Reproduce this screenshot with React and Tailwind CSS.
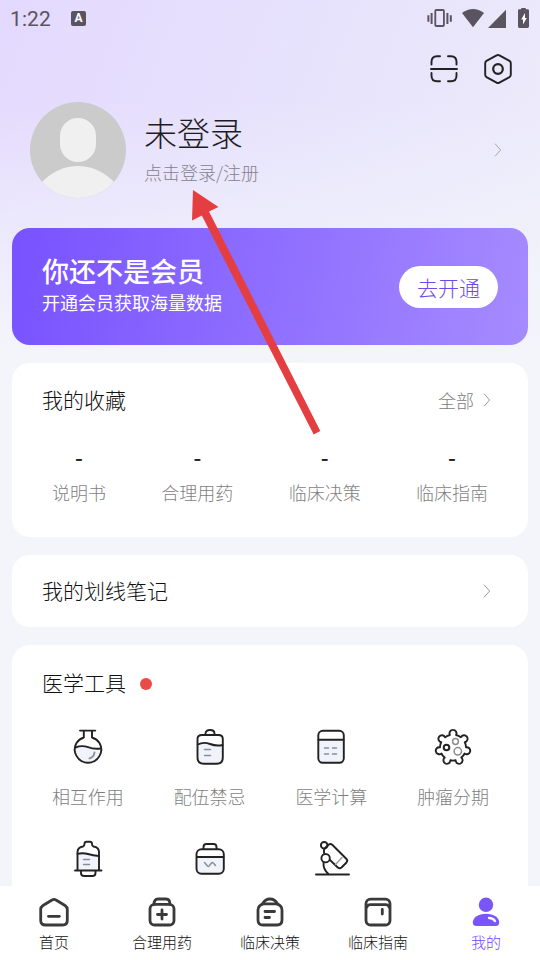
import React from 'react';

const INK = '#222222';

function Chevron({ className = '' }) {
  return (
    <svg width="8" height="14" viewBox="0 0 8 14" fill="none" stroke="currentColor" strokeWidth="1" className={className}>
      <path d="M1 0.7L6.6 7L1 13.3" />
    </svg>
  );
}

/* Status bar and header icons */

function StatusBar() {
  return (
    <div className="flex h-9 items-center justify-between pl-[10px] pr-[10px] text-[#59545f]">
      <div className="flex items-center gap-[20px]">
        <span className="font-['Roboto'] text-[21px] font-normal leading-none tracking-[0.1px] pt-[2px]">1:22</span>
        <span className="flex h-[15px] w-[15px] flex-col items-center justify-center rounded-[2px] bg-[#59545f] font-['Roboto'] text-[12px] font-bold leading-none text-white">
          A
        </span>
      </div>
      <svg width="104" height="22" viewBox="427 6 104 22" fill="currentColor">
        <rect x="436.300" y="9" width="8.600" height="16" rx="1" fill="none" stroke="currentColor" strokeWidth="1.800" />
        <path d="M431.600 12h2v11h-2zM428.400 14.200h2v6.600h-2zM447.400 12h2v11h-2zM450.800 14.200h2v6.600h-2z" />
        <path d="M463 12Q474 4 485 12L474 26.200Z" />
        <path d="M507 8.800V27H489Z" />
        <path d="M524 7h2q1 0 1 1.200h1.600q1.400 0 1.400 1.400v16q0 1.400 -1.400 1.400h-8.200q-1.400 0 -1.400 -1.400v-16q0 -1.400 1.400 -1.400h1.600q0 -1.200 1 -1.200z" />
        <path d="M526 12v5h1.800L524 23.500v-5h-1.800z" fill="#fff" />
      </svg>
    </div>
  );
}

function ScanIcon() {
  return (
    <svg width="28" height="28" viewBox="0 0 28 28" fill="none" stroke={INK} strokeWidth="1.9" strokeLinecap="round">
      <path d="M1.500 9.500V7Q1.500 1.300 7 1.300H10M18 1.300H21Q26.500 1.300 26.500 7V9.500M1.500 18V20.500Q1.500 26.300 7 26.300H10M18 26.300H21Q26.500 26.300 26.500 20.500V18M1 14H27" />
    </svg>
  );
}

function SettingsIcon() {
  return (
    <svg width="28" height="30" viewBox="0 0 28 30" fill="none" stroke={INK} strokeWidth="1.9" strokeLinejoin="round">
      <path d="M12.600 1.400Q14 0.600 15.400 1.400L25.500 6.900Q26.800 7.700 26.800 9.200V20.800Q26.800 22.300 25.500 23.100L15.400 28.600Q14 29.400 12.600 28.600L2.500 23.100Q1.200 22.300 1.200 20.800V9.200Q1.200 7.700 2.500 6.900Z" />
      <circle cx="14" cy="15" r="4.800" strokeWidth="2.200" />
    </svg>
  );
}

function Avatar() {
  return (
    <svg width="96" height="96" viewBox="0 0 96 96">
      <clipPath id="avatar">
        <circle cx="48" cy="48" r="48" />
      </clipPath>
      <g clipPath="url(#avatar)">
        <rect width="96" height="96" fill="#cbcbcb" />
        <rect x="30" y="16" width="36" height="44" rx="18" fill="#f0f0f0" />
        <circle cx="48" cy="112" r="48" fill="#f0f0f0" />
      </g>
    </svg>
  );
}

/* Medical tool icons, all on a 40x40 grid */

function ToolIcon({ children }) {
  return (
    <svg width="40" height="40" viewBox="0 0 40 40" fill="none" stroke={INK} strokeWidth="1.900" strokeLinecap="round" strokeLinejoin="round">
      {children}
    </svg>
  );
}

const FlaskIcon = () => (
  <ToolIcon>
    <path d="M7 21.500Q12 18 20 20.500T33 21A13.200 13.200 0 0 1 7 24Z" fill="#f1f3fb" stroke="none" />
    <path d="M12 3.600H27.300M15.800 4V10.500Q11 12 8.500 16A13.200 13.200 0 1 0 31.500 16Q29 12 24 10.500V4" />
    <path d="M7.500 20.500Q14 18 20 20.200T32.500 21.500" />
    <path d="M26.500 25.500Q26 30 21.500 31.400" stroke="#8b8d98" />
  </ToolIcon>
);

const InfusionIcon = () => (
  <ToolIcon>
    <path d="M8 18Q14 15 20 18T32 18.500V31Q32 36.500 26 36.500H14Q8 36.500 8 31Z" fill="#f1f3fb" stroke="none" />
    <path d="M15.500 8V6.500Q15.500 3 20 3T24.500 6.500V8" />
    <path d="M12 8H28.500Q32.800 8 32.800 12V30.500Q32.800 36.800 26.500 36.800H14Q7.500 36.800 7.500 30.500V12Q7.500 8 12 8Z" />
    <path d="M7.800 17.500Q13.500 14.500 20 17T32.500 18" />
    <path d="M14.500 22.500H20.500M14.500 28.500H20.500" stroke="#8b8d98" strokeWidth="1.500" />
  </ToolIcon>
);

const CalculatorIcon = () => (
  <ToolIcon>
    <path d="M8 13H33V32Q33 35.500 29 35.500H12Q8 35.500 8 32Z" fill="#f1f3fb" stroke="none" />
    <rect x="7.300" y="3.800" width="25.500" height="32" rx="4.500" />
    <path d="M7.500 12.800H32.500" />
    <path d="M13.500 21H17.500M21.500 21H25.500M13.500 27H17.500M21.500 27H25.500" stroke="#8b8d98" strokeWidth="1.500" />
  </ToolIcon>
);

const TumorIcon = () => (
  <ToolIcon>
    <path d="M16.900 8A3.500 3.500 0 1 1 23.100 8Q25.500 8.500 27.900 10.300A3.500 3.500 0 1 1 31.800 15.200Q33 17.500 33 20.300A3.500 3.500 0 1 1 31.600 26.500Q30.500 29 28.300 30.600A3.500 3.500 0 1 1 22.600 33.300Q20 33.900 17.400 33.300A3.500 3.500 0 1 1 11.700 30.600Q9.500 29 8.400 26.500A3.500 3.500 0 1 1 7 20.300Q7 17.500 8.200 15.200A3.500 3.500 0 1 1 12.100 10.300Q14.500 8.500 16.900 8Z" />
    <circle cx="13.500" cy="20.500" r="2.800" strokeWidth="2" />
    <circle cx="22.500" cy="14.500" r="2.900" stroke="#8b8b90" strokeWidth="1.500" />
    <circle cx="24.800" cy="24.300" r="3.700" stroke="#8b8b90" strokeWidth="1.500" />
  </ToolIcon>
);

const DripIcon = () => (
  <ToolIcon>
    <path d="M10 15Q15 13.500 20 15T31 17V31H10Z" fill="#f1f3fb" stroke="none" />
    <path d="M9.500 31V13Q9.500 8.500 15 7.500Q16.500 7 16.500 5Q16.500 2.700 18.500 2.700H22Q24 2.700 24 5Q24 7 25.500 7.500Q31 8.500 31 13V31" />
    <path d="M9.500 14.800Q15 13.500 20 15T31 17M7 31.500H33.500M13 32V34Q13 37 16 37H24.500Q27.500 37 27.500 34V32" />
    <path d="M15.500 20.500H21.500M15.500 25.500H21.500" stroke="#8b8d98" strokeWidth="1.500" />
  </ToolIcon>
);

const MedKitIcon = () => (
  <ToolIcon>
    <path d="M7 18H33V30Q33 34.500 29 34.500H11Q7 34.500 7 30Z" fill="#f1f3fb" stroke="none" />
    <path d="M13.500 10V8Q13.500 5 16.500 5H23.500Q26.500 5 26.500 8V10" />
    <rect x="6.500" y="10.200" width="27.300" height="24.500" rx="5" />
    <path d="M7 18H33.500" />
    <path d="M14.500 23.500L17.500 27Q18.300 27.800 19 27L21.500 24Q22.500 23 23.200 24L25.500 26.500" stroke="#8b8d98" strokeWidth="1.500" />
  </ToolIcon>
);

const MicroscopeIcon = () => (
  <ToolIcon>
    <circle cx="13.200" cy="6.300" r="3.300" />
    <path d="M13 14V11Q13 9.800 14 9L17.500 5.800Q19.500 4.300 21.500 6L35.500 20Q37 21.700 35.500 23.500L30.500 28.500Q28.500 30 26.500 28.200L19 21" />
    <circle cx="14.600" cy="19.200" r="4.200" />
    <path d="M12.500 23.500Q12 30.500 17.500 35M5 35.500H38" />
    <path d="M24.500 25.500L31 18.500" stroke="#9a9a9e" strokeWidth="1.400" />
  </ToolIcon>
);

/* Tab bar icons, 32x32 grid */

function TabIcon({ children }) {
  return (
    <svg width="32" height="32" viewBox="0 0 32 32" fill="none" stroke="#3a3a3a" strokeWidth="2.800" strokeLinecap="round" strokeLinejoin="round">
      {children}
    </svg>
  );
}

const HomeTabIcon = () => (
  <TabIcon>
    <path d="M14 4Q16 2.700 18 4L27 9.500Q29.300 11 29.300 13.500V24.500Q29.300 29 24.500 29H7.500Q2.700 29 2.700 24.500V13.500Q2.700 11 5 9.500Z" />
    <path d="M10.500 20.300H21.300" />
  </TabIcon>
);

const DrugTabIcon = () => (
  <TabIcon>
    <path d="M8 8.500Q8 3 12 3H20Q24 3 24 8.500" />
    <rect x="4" y="8.300" width="24" height="20.700" rx="4.500" />
    <path d="M16 14V23M11.500 18.500H20.500" />
  </TabIcon>
);

const DecisionTabIcon = () => (
  <TabIcon>
    <path d="M8.500 8Q11 3 16 3T23.500 8" />
    <path d="M9 7.800H23Q28 9.500 28 14V24Q28 29 23 29H9Q4 29 4 24V14Q4 9.500 9 7.800Z" />
    <path d="M11 15.500H20.500M11 21.500H15.500" />
  </TabIcon>
);

const GuideTabIcon = () => (
  <TabIcon>
    <rect x="4" y="3.200" width="24" height="25.800" rx="4.500" />
    <path d="M5 11Q5.500 8.600 8.500 8.600H23.500Q26.500 8.600 27 11" />
    <path d="M20.300 13.500V18" />
  </TabIcon>
);

const MineTabIcon = () => (
  <svg width="32" height="32" viewBox="0 0 32 32" fill="#7a55fa">
    <circle cx="16" cy="8.800" r="7.200" />
    <path d="M16 17.800C23.500 17.800 29.200 21.500 29.200 26.500Q29.200 30 25.500 30H6.500Q2.800 30 2.800 26.500C2.800 21.500 8.500 17.800 16 17.800Z" />
    <path d="M19 22Q23 22 25 25" fill="none" stroke="#fff" strokeWidth="2.300" strokeLinecap="round" />
  </svg>
);

const favorites = ['说明书', '合理用药', '临床决策', '临床指南'];

const tools = [
  { label: '相互作用', icon: FlaskIcon },
  { label: '配伍禁忌', icon: InfusionIcon },
  { label: '医学计算', icon: CalculatorIcon },
  { label: '肿瘤分期', icon: TumorIcon },
  { label: '', icon: DripIcon },
  { label: '', icon: MedKitIcon },
  { label: '', icon: MicroscopeIcon },
];

const tabs = [
  { label: '首页', icon: HomeTabIcon },
  { label: '合理用药', icon: DrugTabIcon },
  { label: '临床决策', icon: DecisionTabIcon },
  { label: '临床指南', icon: GuideTabIcon },
  { label: '我的', icon: MineTabIcon, active: true },
];

function Profile() {
  return (
    <div className="flex h-24 items-center pl-[30px] pr-[38px]">
      <Avatar />
      <div className="ml-[18px] flex flex-col pb-1">
        <h1 className="text-[33px] font-light leading-[44px] text-[#1f1d24]">未登录</h1>
        <p className="mt-[4px] text-[18px] leading-[28px] text-[#85828e]">点击登录/注册</p>
      </div>
      <Chevron className="ml-auto text-[#a9a7b3]" />
    </div>
  );
}

function MemberBanner() {
  return (
    <div className="flex h-[117px] items-center justify-between rounded-[18px] bg-[linear-gradient(100deg,#7852ff_0%,#a58bff_100%)] px-[30px] text-white">
      <div>
        <p className="text-[27px] font-medium leading-[32px]">你还不是会员</p>
        <p className="text-[18px] font-normal leading-[31px]">开通会员获取海量数据</p>
      </div>
      <button className="h-[42px] w-[99px] rounded-full bg-white pt-[2px] text-[21px] font-light leading-none text-[#7048e8]">去开通</button>
    </div>
  );
}

function Favorites() {
  return (
    <section className="h-[174px] rounded-[18px] bg-white pt-[22px]">
      <div className="flex h-[30px] items-center pl-[30px] pr-[37px]">
        <h2 className="text-[21px] text-[#111]">我的收藏</h2>
        <span className="ml-auto mr-[9px] text-[18px] text-[#7c7c7c]">全部</span>
        <Chevron className="text-[#999]" />
      </div>
      <div className="mt-[27px] flex justify-between px-10">
        {favorites.map((label) => (
          <div key={label} className="flex flex-col items-center">
            <span className="h-[36px] text-[22px] font-medium leading-[28px] text-[#222]">-</span>
            <span className="text-[18px] leading-[28px] text-[#7f7f7f]">{label}</span>
          </div>
        ))}
      </div>
    </section>
  );
}

function Tools() {
  return (
    <section className="h-[330px] shrink-0 rounded-t-[18px] bg-white pt-[23px]">
      <div className="flex h-[30px] items-center pl-[30px]">
        <h2 className="text-[21px] text-[#111]">医学工具</h2>
        <span className="ml-[14px] mt-px h-3 w-3 rounded-full bg-[#e84b49]" />
      </div>
      <div className="mt-[29px] grid grid-cols-4 pl-[15px] pr-[14px]">
        {tools.map(({ label, icon: Icon }, i) => (
          <div key={i} className="flex h-[112px] flex-col items-center">
            <Icon />
            <span className="mt-[15px] text-[18px] leading-[28px] text-[#7f7f7f]">{label}</span>
          </div>
        ))}
      </div>
    </section>
  );
}

function TabBar() {
  return (
    <nav className="grid h-[74px] shrink-0 grid-cols-5 bg-white pt-[10px]">
      {tabs.map(({ label, icon: Icon, active }) => (
        <div key={label} className="flex flex-col items-center">
          <Icon />
          <span className={active ? 'mt-[4px] text-[15px] leading-[20px] text-[#6f48f8]' : 'mt-[4px] text-[15px] leading-[20px] text-[#111]'}>
            {label}
          </span>
        </div>
      ))}
    </nav>
  );
}

export default function App() {
  return (
    <div className="relative flex h-[960px] w-[540px] flex-col overflow-hidden bg-[#f3f5fb] bg-[linear-gradient(180deg,transparent_100px,#f3f5fb_350px),linear-gradient(110deg,#e4d9fe_0%,#e7e3fc_40%,#f0effa_85%)] font-['Noto_Sans_CJK_SC',sans-serif] font-light">
      <div className="min-h-0 flex-1 overflow-hidden">
        <StatusBar />
        <div className="flex h-[66px] items-center justify-end gap-[26px] pr-7">
          <ScanIcon />
          <SettingsIcon />
        </div>
        <Profile />
        <main className="mt-[30px] flex flex-col gap-[18px] px-3">
          <MemberBanner />
          <Favorites />
          <section className="flex h-[72px] items-center justify-between rounded-[18px] bg-white pl-[30px] pr-[37px]">
            <h2 className="pb-px text-[21px] text-[#111]">我的划线笔记</h2>
            <Chevron className="text-[#999]" />
          </section>
          <Tools />
        </main>
      </div>
      <TabBar />

      {/* pointer to the login link */}
      <svg className="pointer-events-none absolute left-0 top-0" width="540" height="960" viewBox="0 0 540 960" fill="#e53e40">
        <path d="M193 190L218.500 207L209 211.500L320.300 431L313.700 434.500L201.800 215.500L192 220.500Z" />
      </svg>
    </div>
  );
}
